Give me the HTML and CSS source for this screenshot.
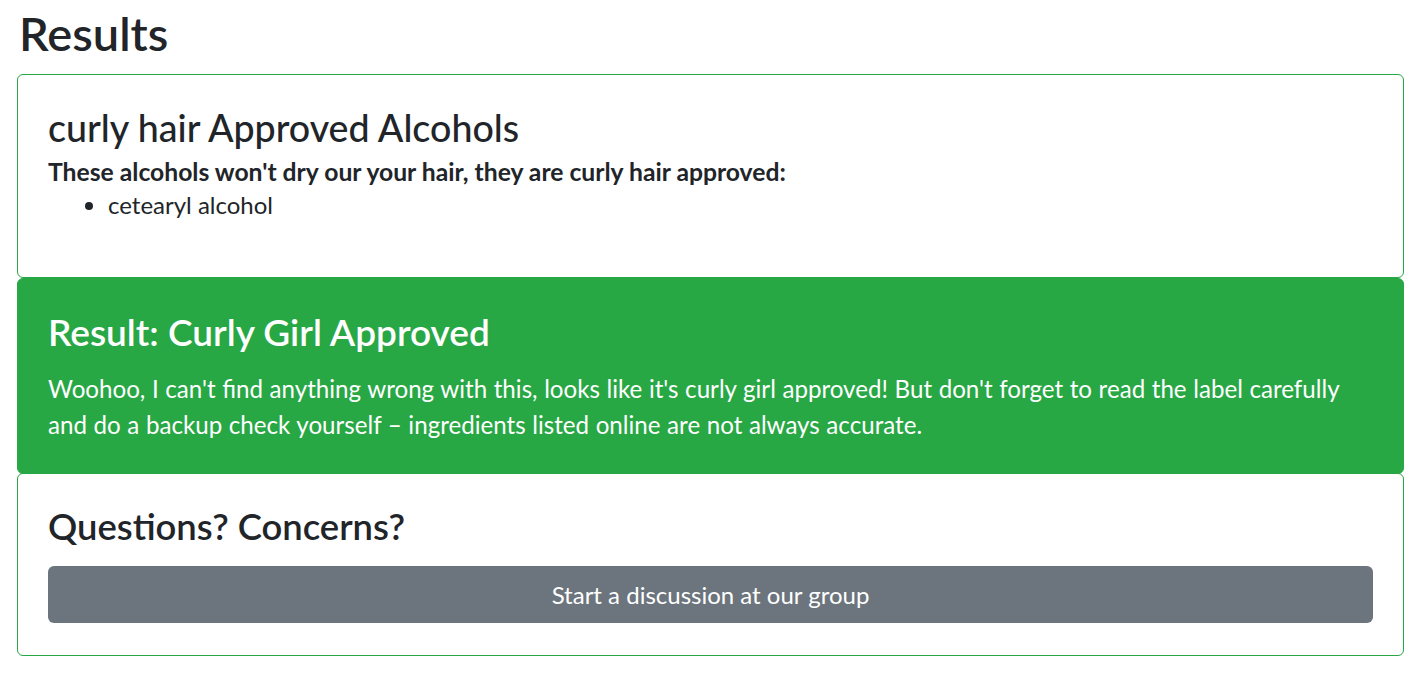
FILE: index.html
```html
<!DOCTYPE html>
<html lang="en">
<head>
    <meta charset="UTF-8">
    <meta name="viewport" content="width=device-width, initial-scale=1.0">
    <title>Results</title>
    <link rel="stylesheet" href="styles.css">
</head>
<body>

<div class="page">
    <h1 class="page-title">Results</h1>

    <div class="card card-outline">
        <div class="card-body">
            <h3 class="card-title title-tight">curly hair Approved Alcohols</h3>
            <h6 class="card-lead">These alcohols won't dry our your hair, they are curly hair approved:</h6>
            <ul class="alcohol-list">
                <li>cetearyl alcohol</li>
            </ul>
        </div>
    </div>

    <div class="card card-success">
        <div class="card-body body-success">
            <h3 class="card-title title-spaced">Result: Curly Girl Approved</h3>
            <p class="card-text">Woohoo, I can't find anything wrong with this, looks like it's curly girl approved! But don't forget to read the label carefully and do a backup check yourself &ndash; ingredients listed online are not always accurate.</p>
        </div>
    </div>

    <div class="card card-outline card-joined">
        <div class="card-body body-last">
            <h3 class="card-title">Questions? Concerns?</h3>
            <button type="button" class="btn-group-link">Start a discussion at our group</button>
        </div>
    </div>
</div>

</body>
</html>
```

FILE: styles.css
```css
body {
    font-family: 'Lato', 'Open Sans', sans-serif;
    font-size: 24px;
    line-height: 1.5;
    color: #212529;
    background-color: #fff;
    margin: 0;
}

.page {
    padding: 0 21px 0 17px;
}

.page-title {
    font-size: 47px;
    font-weight: 600;
    line-height: 1.2;
    margin: 5px 0 13px 2px;
}

.card {
    border: 1px solid #28a745;
    border-radius: 6px;
}

.card-body {
    padding: 30px 30px 31px;
}

.card-outline {
    background-color: #fff;
}

.card-success {
    background-color: #28a745;
    color: #fff;
}

/* shares its top border with the card above */
.card-joined {
    margin-top: -1px;
}

.body-success {
    padding-bottom: 30px;
}

.body-last {
    padding-bottom: 32px;
}

.card-title {
    font-size: 36.4px;
    font-weight: 600;
    line-height: 45.6px;
    margin: 0 0 16px 0;
}

.title-tight {
    font-weight: 500;
    font-size: 37.6px;
    margin-bottom: 7px;
}

.title-spaced {
    font-size: 37px;
    margin-bottom: 17px;
}

.card-lead {
    font-size: 24.7px;
    font-weight: 700;
    line-height: 28.8px;
    margin: 0;
}

.alcohol-list {
    margin: 0 0 23px 0;
    padding-left: 60px;
}

.card-text {
    font-size: 24.15px;
    word-spacing: 0.4px;
    line-height: 36px;
    margin: 0;
}

.btn-group-link {
    display: block;
    width: 100%;
    height: 57px;
    background-color: #6c757d;
    color: #fff;
    border: none;
    border-radius: 6px;
    font-family: inherit;
    font-size: 24px;
    cursor: pointer;
}

.btn-group-link:hover {
    background-color: #5a6268;
}
```
